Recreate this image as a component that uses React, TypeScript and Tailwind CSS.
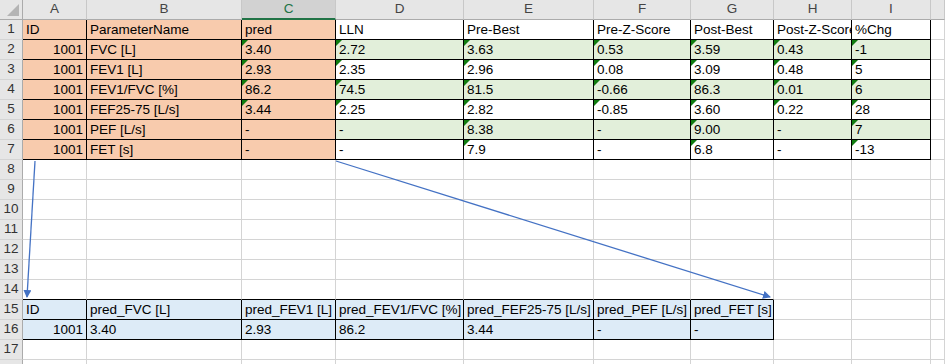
import { FunctionComponent, ReactNode } from "react";

const COLS = ["A", "B", "C", "D", "E", "F", "G", "H", "I", "J"];
const ROW_COUNT = 18;

type Fill = "orange" | "green" | "blue" | "none";

interface CellData {
  text?: string;
  fill?: Fill;
  right?: boolean; // number aligned right
  flag?: boolean; // green error triangle
  borderR?: boolean;
  borderB?: boolean;
}

const fillClass: Record<Fill, string> = {
  orange: "bg-[#f8cbad]",
  green: "bg-[#e2efda]",
  blue: "bg-[#ddebf7]",
  none: "bg-white",
};

const isNum = (s: string) => /^-?\d+(\.\d+)?$/.test(s);

// top table, rows 1..7, columns A..I
const topHeader = [
  "ID",
  "ParameterName",
  "pred",
  "LLN",
  "Pre-Best",
  "Pre-Z-Score",
  "Post-Best",
  "Post-Z-Score",
  "%Chg",
];
const topRows = [
  ["1001", "FVC [L]", "3.40", "2.72", "3.63", "0.53", "3.59", "0.43", "-1"],
  ["1001", "FEV1 [L]", "2.93", "2.35", "2.96", "0.08", "3.09", "0.48", "5"],
  ["1001", "FEV1/FVC [%]", "86.2", "74.5", "81.5", "-0.66", "86.3", "0.01", "6"],
  ["1001", "FEF25-75 [L/s]", "3.44", "2.25", "2.82", "-0.85", "3.60", "0.22", "28"],
  ["1001", "PEF [L/s]", "-", "-", "8.38", "-", "9.00", "-", "7"],
  ["1001", "FET [s]", "-", "-", "7.9", "-", "6.8", "-", "-13"],
];

const bottomHeader = [
  "ID",
  "pred_FVC [L]",
  "pred_FEV1 [L]",
  "pred_FEV1/FVC [%]",
  "pred_FEF25-75 [L/s]",
  "pred_PEF [L/s]",
  "pred_FET [s]",
];
const bottomRow = ["1001", "3.40", "2.93", "86.2", "3.44", "-", "-"];

function buildSheet(): CellData[][] {
  const sheet: CellData[][] = [];
  for (let r = 1; r <= ROW_COUNT; r++) {
    sheet.push(COLS.map(() => ({ fill: "none" as Fill })));
  }
  // top table
  topHeader.forEach((t, c) => {
    sheet[0][c] = {
      text: t,
      fill: c < 3 ? "orange" : "none",
      borderR: true,
      borderB: true,
    };
  });
  topRows.forEach((row, i) => {
    const r = i + 1;
    row.forEach((t, c) => {
      sheet[r][c] = {
        text: t,
        fill: c < 3 ? "orange" : r % 2 === 1 ? "green" : "none",
        right: c === 0,
        flag: c >= 2 && isNum(t),
        borderR: true,
        borderB: true,
      };
    });
  });
  // bottom table, rows 15..16
  for (let c = 0; c < 7; c++) {
    sheet[13][c] = { ...sheet[13][c], borderB: true };
    sheet[14][c] = { text: bottomHeader[c], fill: "blue", borderR: true, borderB: true };
    sheet[15][c] = {
      text: bottomRow[c],
      fill: "blue",
      right: c === 0,
      borderR: true,
      borderB: true,
    };
  }
  return sheet;
}

const Cell: FunctionComponent<{ cell: CellData }> = ({ cell }) => (
  <div
    className={`relative h-5 overflow-hidden whitespace-nowrap border-r border-b px-[3px] text-[13.5px] leading-[19px] text-black ${
      fillClass[cell.fill ?? "none"]
    } ${cell.borderR ? "border-r-black" : "border-r-[#d4d4d4]"} ${
      cell.borderB ? "border-b-black" : "border-b-[#d4d4d4]"
    } ${cell.right ? "text-right" : "text-left"}`}
  >
    {cell.flag && (
      <svg className="absolute left-0 top-0" width="6" height="6" viewBox="0 0 6 6">
        <polygon points="0,0 6,0 0,6" fill="#107c10" />
      </svg>
    )}
    {cell.text}
  </div>
);

const HeaderCell: FunctionComponent<{ children?: ReactNode; selected?: boolean }> = ({
  children,
  selected,
}) => (
  <div
    className={`flex h-5 items-center justify-center border-r border-r-[#c8c8c8] text-[13.5px] ${
      selected
        ? "border-b-2 border-b-[#217346] bg-[#d2d2d2] text-[#217346]"
        : "border-b border-b-[#ababab] bg-[#e6e6e6] text-[#444]"
    }`}
  >
    {children}
  </div>
);

export default function App() {
  const sheet = buildSheet();

  return (
    <div
      className="relative h-[364px] w-[945px] overflow-hidden bg-white"
      style={{ fontFamily: '"Liberation Sans", Arial, sans-serif' }}
    >
      <div className="grid grid-cols-[23px_64px_155px_94px_128px_130px_97px_83px_78px_79px_1fr]">
        {/* corner */}
        <div className="relative h-5 border-r border-b border-r-[#ababab] border-b-[#ababab] bg-[#e6e6e6]">
          <svg className="absolute bottom-[3px] right-[3px]" width="12" height="12" viewBox="0 0 12 12">
            <polygon points="12,0 12,12 0,12" fill="#b4b4b4" />
          </svg>
        </div>
        {COLS.map((c) => (
          <HeaderCell key={c} selected={c === "C"}>
            {c === "J" ? null : c}
          </HeaderCell>
        ))}

        {sheet.map((row, r) => [
          <div
            key={`h${r}`}
            className="flex h-5 items-center justify-center border-r border-b border-r-[#ababab] border-b-[#d4d4d4] bg-[#e6e6e6] text-[13.5px] text-[#333]"
          >
            {r + 1}
          </div>,
          ...row.map((cell, c) => <Cell key={`${r}-${c}`} cell={cell} />),
        ])}
      </div>

      {/* trace arrows over the grid */}
      <svg className="pointer-events-none absolute left-0 top-0" width="945" height="364">
        <defs>
          <marker id="ah" markerWidth="8" markerHeight="8" refX="7" refY="4" orient="auto" markerUnits="userSpaceOnUse">
            <polygon points="0,0 8,4 0,8" fill="#4472c4" />
          </marker>
        </defs>
        <line x1="35" y1="161" x2="27" y2="297" stroke="#4472c4" strokeWidth="1.3" markerEnd="url(#ah)" />
        <line x1="336" y1="161" x2="770" y2="297" stroke="#4472c4" strokeWidth="1.3" markerEnd="url(#ah)" />
      </svg>
    </div>
  );
}
